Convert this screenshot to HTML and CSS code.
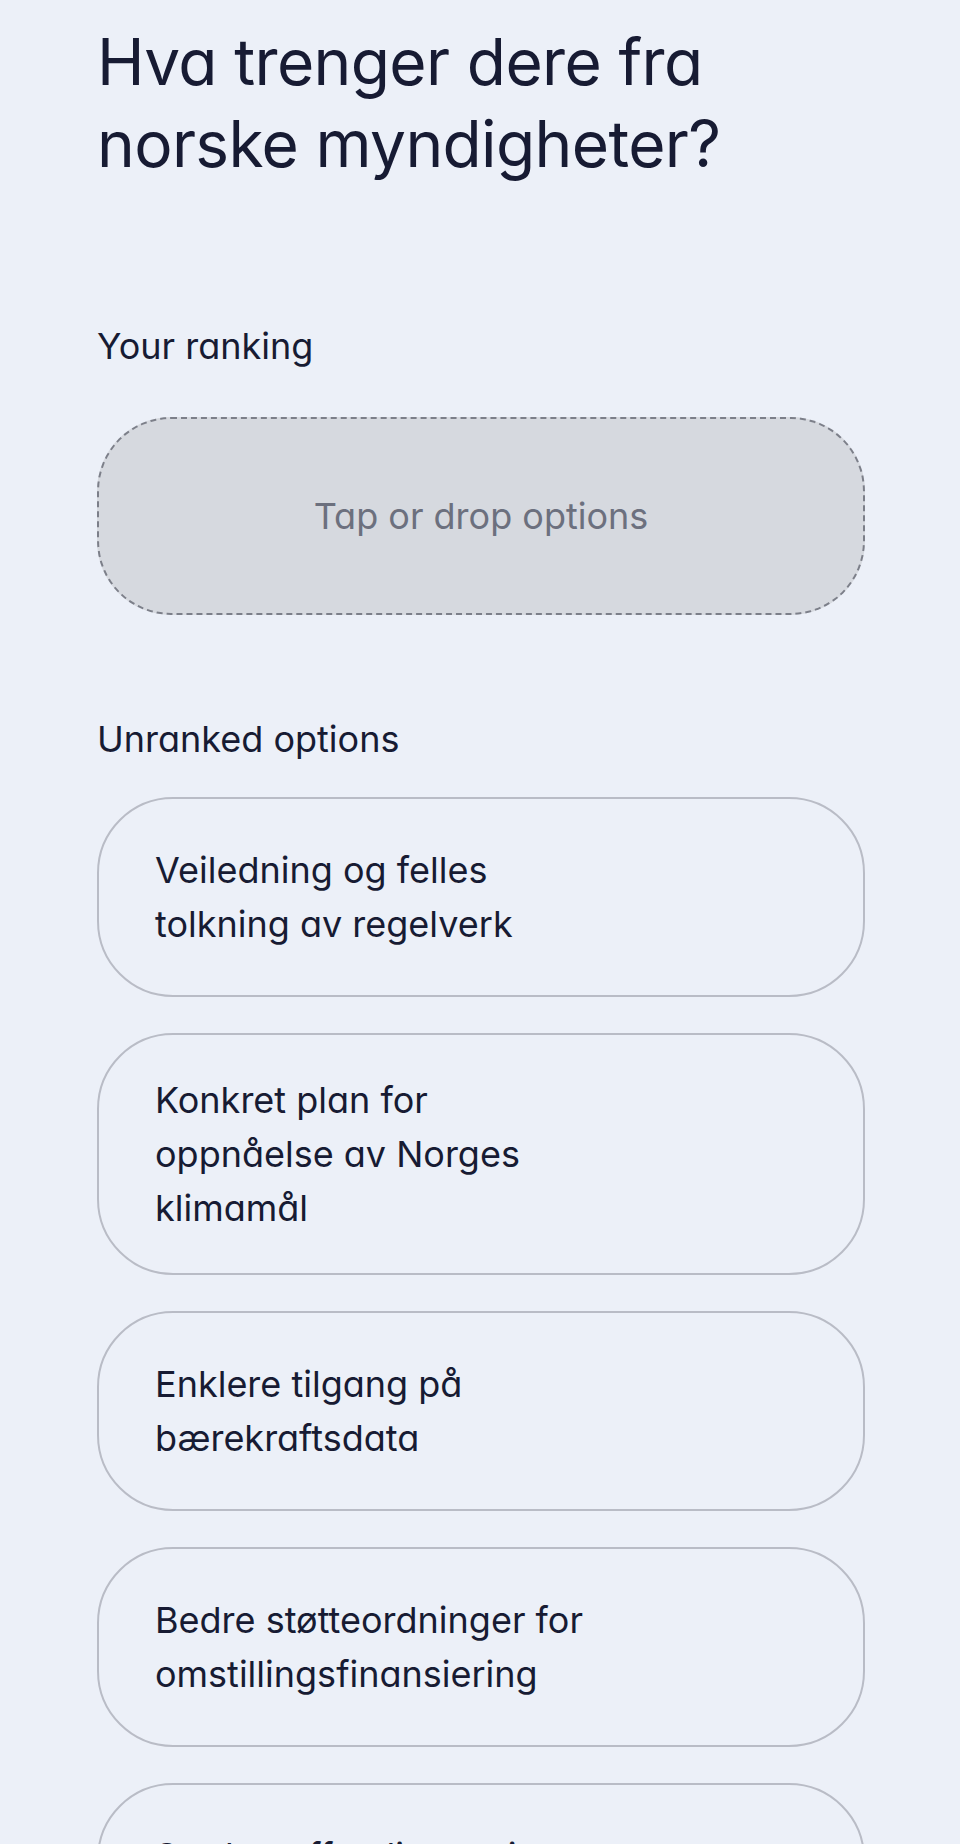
FILE: index.html
```html
<!DOCTYPE html>
<html lang="no">
<head>
    <meta charset="UTF-8">
    <meta name="viewport" content="width=device-width, initial-scale=1.0">
    <title>Rangering</title>
    <link rel="stylesheet" href="styles.css">
</head>
<body>
    <main class="ranking">
        <h1>Hva trenger dere fra norske myndigheter?</h1>

        <h2 class="section-label">Your ranking</h2>
        <div class="dropzone">
            <span>Tap or drop options</span>
        </div>

        <h2 class="section-label section-label--unranked">Unranked options</h2>
        <ul class="options">
            <li class="option"><span class="option-label">Veiledning og felles tolkning av regelverk</span></li>
            <li class="option"><span class="option-label">Konkret plan for oppnåelse av Norges klimamål</span></li>
            <li class="option"><span class="option-label">Enklere tilgang på bærekraftsdata</span></li>
            <li class="option"><span class="option-label">Bedre støtteordninger for omstillingsfinansiering</span></li>
            <li class="option"><span class="option-label">Styrket offentlig satsing på grønn omstilling</span></li>
        </ul>
    </main>
</body>
</html>
```

FILE: styles.css
```css
* {
    margin: 0;
    padding: 0;
    box-sizing: border-box;
}

body {
    font-family: 'Inter', 'Noto Sans', sans-serif;
    font-feature-settings: "cv11";
    background: #ecf0f8;
    color: #171b33;
}

.ranking {
    padding: 21px 95px 40px 97px;
}

h1 {
    font-size: 64px;
    font-weight: 400;
    line-height: 82px;
    letter-spacing: -0.01em;
    max-width: 640px;
}

.section-label {
    font-size: 36px;
    font-weight: 400;
    line-height: 47px;
    margin-top: 138px;
    margin-bottom: 47px;
}

.section-label--unranked {
    margin-top: 101px;
    margin-bottom: 34px;
}

.dropzone {
    height: 198px;
    background: #d6d9df;
    border: 2px dashed #7c7f89;
    border-radius: 74px;
    display: flex;
    align-items: center;
    justify-content: center;
    font-size: 36px;
    color: #6c707e;
}

.options {
    list-style: none;
    display: flex;
    flex-direction: column;
    gap: 36px;
}

.option {
    min-height: 200px;
    padding: 38px 56px;
    border: 2px solid #b9bcc6;
    border-radius: 76px;
    display: flex;
    align-items: center;
    font-size: 36px;
    line-height: 54px;
}

.option-label {
    max-width: 432px;
}
```
